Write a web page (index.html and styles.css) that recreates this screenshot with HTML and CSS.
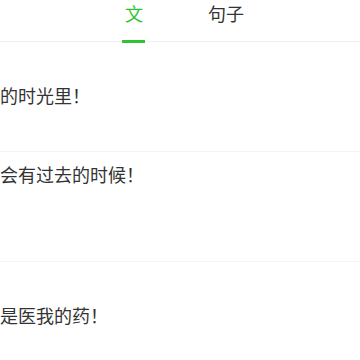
FILE: index.html
```html
<!DOCTYPE html>
<html lang="zh-CN">
<head>
	<meta charset="UTF-8">
	<title>文 · 句子</title>
	<link rel="stylesheet" href="styles.css">
</head>
<body>
	<div class="tabs">
		<div class="tab on">文<span class="bar"></span></div>
		<div class="tab">句子</div>
	</div>
	<ul class="list">
		<li class="item">的时光里！</li>
		<li class="item top">会有过去的时候！</li>
		<li class="item">是医我的药！</li>
	</ul>
</body>
</html>
```

FILE: styles.css
```css
*{
	margin: 0;
	padding: 0;
}
body{
	background: #fff;
	font-family: "Noto Sans CJK SC", "Noto Sans", sans-serif;
	color: #333;
	overflow: hidden;
}
.tabs{
	height: 41px;
	display: flex;
	justify-content: center;
	border-bottom: 1px solid #f0f0f0;
}
.tabs .tab{
	position: relative;
	width: 92px;
	height: 26px;
	line-height: 26px;
	text-align: center;
	font-size: 18px;
	color: #333;
}
.tabs .tab.on{
	color: #2fc42f;
}
.tabs .tab .bar{
	position: absolute;
	left: 34px;
	top: 40px;
	width: 23px;
	height: 3px;
	background: #2fc42f;
}
.list{
	list-style: none;
}
.list .item{
	height: 105px;
	padding-bottom: 4px;
	display: flex;
	align-items: center;
	border-bottom: 1px solid #f3f3f3;
	font-size: 18px;
	line-height: 24px;
	white-space: nowrap;
}
.list .item.top{
	align-items: flex-start;
	padding-top: 10px;
	padding-bottom: 0;
	height: 99px;
}
```
